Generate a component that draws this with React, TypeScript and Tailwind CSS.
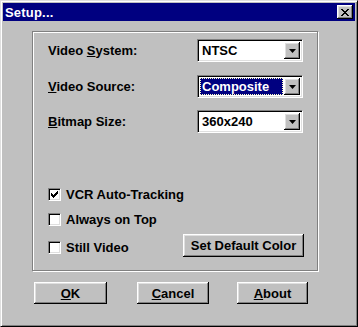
import React from "react";

const raised =
  "bg-[#c0c0c0] shadow-[inset_-1px_-1px_#000,inset_1px_1px_#fff,inset_-2px_-2px_#808080,inset_2px_2px_#dfdfdf]";

function Combo({ value, selected }: { value: string; selected?: boolean }) {
  return (
    <div className="w-[106px] h-[23px] flex bg-white border border-t-[#808080] border-l-[#808080] border-b-white border-r-white shadow-[inset_1px_1px_#000,inset_-1px_-1px_#dfdfdf] p-[2px]">
      <div className="flex-1 flex items-stretch pr-[1px]">
        {selected ? (
          <div className="flex-1 bg-[#000080] text-white border border-dotted border-[#ffffc0] flex items-center pl-[1px]">
            {value}
          </div>
        ) : (
          <div className="flex-1 flex items-center pl-[2px]">{value}</div>
        )}
      </div>
      <div className={`w-[16px] flex items-center justify-center ${raised}`}>
        <svg width="7" height="4" viewBox="0 0 7 4">
          <polygon points="0,0 7,0 3.5,4" fill="#000" />
        </svg>
      </div>
    </div>
  );
}

function Check({ checked }: { checked?: boolean }) {
  const px = [
    [6, 0],
    [5, 1], [6, 1],
    [0, 2], [4, 2], [5, 2], [6, 2],
    [0, 3], [1, 3], [3, 3], [4, 3], [5, 3],
    [0, 4], [1, 4], [2, 4], [3, 4], [4, 4],
    [1, 5], [2, 5], [3, 5],
    [2, 6],
  ];
  return (
    <div className="w-[13px] h-[13px] bg-white border border-t-[#808080] border-l-[#808080] border-b-white border-r-white shadow-[inset_1px_1px_#000,inset_-1px_-1px_#dfdfdf] flex items-center justify-center shrink-0">
      {checked && (
        <svg width="7" height="7" viewBox="0 0 7 7" shapeRendering="crispEdges">
          {px.map(([x, y], i) => (
            <rect key={i} x={x} y={y} width="1" height="1" fill="#000" />
          ))}
        </svg>
      )}
    </div>
  );
}

function Btn({ children, className = "" }: { children: React.ReactNode; className?: string }) {
  return (
    <div className={`h-[22px] flex items-center justify-center ${raised} ${className}`}>
      {children}
    </div>
  );
}

export default function App() {
  return (
    <div className="w-[358px] h-[327px] bg-[#c0c0c0] border border-t-[#dfdfdf] border-l-[#dfdfdf] border-r-black border-b-black shadow-[inset_1px_1px_#fff,inset_-1px_-1px_#808080] p-[2px] flex flex-col font-['Liberation_Sans',Arial,sans-serif] font-bold text-[13px] text-black leading-none">
      <div className="h-[18px] bg-[#000080] flex items-center pl-[2px] pr-[2px]">
        <span className="text-white text-[13px] tracking-[0.2px]">Setup...</span>
        <div className="ml-auto w-[16px] h-[14px] bg-[#c0c0c0] shadow-[inset_-1px_-1px_#000,inset_1px_1px_#fff,inset_-2px_-2px_#808080,inset_2px_2px_#dfdfdf] flex items-center justify-center">
          <svg width="8" height="7" viewBox="0 0 8 7" shapeRendering="crispEdges">
            {[
              [0, 0], [1, 0], [6, 0], [7, 0],
              [1, 1], [2, 1], [5, 1], [6, 1],
              [2, 2], [3, 2], [4, 2], [5, 2],
              [3, 3], [4, 3],
              [2, 4], [3, 4], [4, 4], [5, 4],
              [1, 5], [2, 5], [5, 5], [6, 5],
              [0, 6], [1, 6], [6, 6], [7, 6],
            ].map(([x, y], i) => (
              <rect key={i} x={x} y={y} width="1" height="1" fill="#000" />
            ))}
          </svg>
        </div>
      </div>

      <div className="mt-[10px] ml-[29px] w-[286px] h-[240px] border border-[#808080] shadow-[1px_1px_#fff,inset_1px_1px_#fff] pl-[15px] pt-[7px] flex flex-col">
        <div className="h-[23px] flex items-center">
          <div className="w-[149px]">
            Video <u className="underline">S</u>ystem:
          </div>
          <Combo value="NTSC" />
        </div>
        <div className="mt-[13px] h-[23px] flex items-center">
          <div className="w-[149px]">
            <u className="underline">V</u>ideo Source:
          </div>
          <Combo value="Composite" selected />
        </div>
        <div className="mt-[12px] h-[23px] flex items-center">
          <div className="w-[149px]">
            <u className="underline">B</u>itmap Size:
          </div>
          <Combo value="360x240" />
        </div>

        <div className="mt-[55px] h-[13px] flex items-center gap-[5px]">
          <Check checked />
          <span>VCR Auto-Tracking</span>
        </div>
        <div className="mt-[12px] h-[13px] flex items-center gap-[5px]">
          <Check />
          <span>Always on Top</span>
        </div>
        <div className="mt-[8px] h-[23px] flex items-start pr-[13px]">
          <div className="mt-[7px] h-[13px] flex items-center gap-[5px]">
            <Check />
            <span>Still Video</span>
          </div>
          <Btn className="ml-auto w-[121px] h-[23px]">Set Default Color</Btn>
        </div>
      </div>

      <div className="mt-[11px] flex">
        <Btn className="ml-[31px] w-[73px]">
          <span>
            <u className="underline">O</u>K
          </span>
        </Btn>
        <Btn className="ml-[30px] w-[72px]">
          <span>
            <u className="underline">C</u>ancel
          </span>
        </Btn>
        <Btn className="ml-[28px] w-[71px]">
          <span>
            <u className="underline">A</u>bout
          </span>
        </Btn>
      </div>
    </div>
  );
}
